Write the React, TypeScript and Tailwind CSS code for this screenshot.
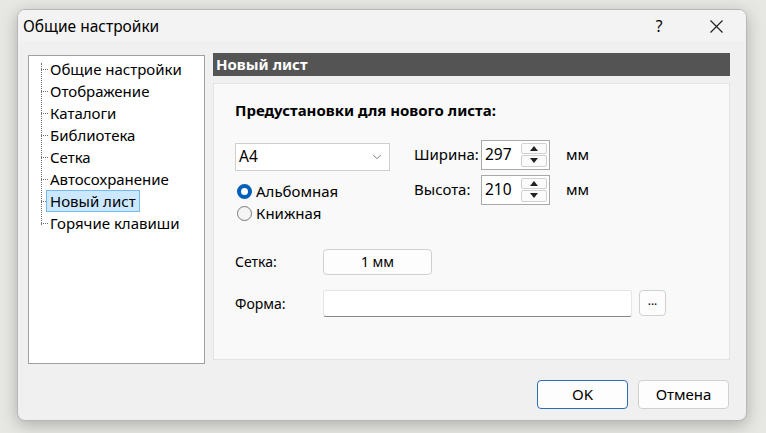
import { ChevronDown } from "lucide-react";

const TREE = [
  "Общие настройки",
  "Отображение",
  "Каталоги",
  "Библиотека",
  "Сетка",
  "Автосохранение",
  "Новый лист",
  "Горячие клавиши",
];

const FONT = { fontFamily: '"Noto Sans", "Open Sans", sans-serif' };

function Spinner({ value }: { value: string }) {
  return (
    <div className="flex h-[30px] w-[69px] border border-[#a9a9a9] bg-white">
      <span className="flex-1 pl-[3px] pt-[2px] text-[15.5px] leading-[22px] text-black">{value}</span>
      <div className="my-[2px] mr-[2px] flex w-[26px] flex-col gap-[1px]">
        <div className="flex flex-1 items-center justify-center rounded-[2px] border border-[#d0d0d0] bg-[#fbfbfb]">
          <svg width="8" height="5" viewBox="0 0 8 5"><path d="M0 5L4 0L8 5Z" fill="#222" /></svg>
        </div>
        <div className="flex flex-1 items-center justify-center rounded-[2px] border border-[#d0d0d0] bg-[#fbfbfb]">
          <svg width="8" height="5" viewBox="0 0 8 5"><path d="M0 0L4 5L8 0Z" fill="#222" /></svg>
        </div>
      </div>
    </div>
  );
}

export default function App() {
  return (
    <div className="h-[433px] w-[766px] bg-[#e7e8e3] pl-[17px] pt-[9px]" style={FONT}>
      <div className="flex h-[412px] w-[730px] flex-col overflow-hidden rounded-[8px] border border-[#b8b8b8] bg-[#f0f0f0] shadow-[0_4px_16px_rgba(0,0,0,0.25)]">
        {/* Title bar */}
        <div className="flex h-[31px] items-center bg-[#f3f3f3] pl-[5px] pt-[2px] text-[15.5px] text-black">
          <span className="flex-1">Общие настройки</span>
          <span className="w-[12px] text-center">?</span>
          <svg className="ml-[45px] mr-[23px]" width="13" height="13" viewBox="0 0 13 13">
            <path d="M0.5 0.5L12.5 12.5M12.5 0.5L0.5 12.5" stroke="#222" strokeWidth="1.2" />
          </svg>
        </div>

        {/* Body */}
        <div className="flex gap-[8px] pl-[10px] pt-[14px]">
          {/* Tree */}
          <div className="relative h-[309px] w-[177px] border border-[#a0a0a0] bg-white">
            <div className="absolute left-[12px] top-[7px] h-[162px] border-l border-dotted border-[#707070]" />
            <div className="flex flex-col pl-[12px] pt-[2px]">
              {TREE.map((t) => (
                <div key={t} className="flex h-[22px] items-center">
                  <div className="w-[7px] border-t border-dotted border-[#707070]" />
                  <span
                    className={`ml-[-2px] px-[3px] text-[15px] leading-[20px] text-black ${
                      t === "Новый лист" ? "border border-[#77b9ef] bg-[#cce8ff]" : "border border-transparent"
                    }`}
                  >
                    {t}
                  </span>
                </div>
              ))}
            </div>
          </div>

          {/* Right side */}
          <div className="flex w-[517px] flex-col">
            <div className="mt-[-2px] flex h-[23px] items-center bg-[#545454] pl-[3px] text-[15px] font-bold text-white">
              Новый лист
            </div>
            <div className="mt-[7px] h-[277px] border border-[#e3e3e3] bg-[#f9f9f9] pl-[21px] pt-[15px] text-black">
              <div className="text-[15px] font-bold">Предустановки для нового листа:</div>

              <div className="mt-[21px] flex">
                <div className="flex w-[180px] flex-col">
                  <div className="flex h-[28px] w-[155px] items-center justify-between border border-[#cfcfcf] bg-white pl-[3px] pr-[5px] text-[15.5px]">
                    <span>A4</span>
                    <ChevronDown size={14} strokeWidth={1.3} color="#555" />
                  </div>
                  <div className="mt-[10px] flex h-[22px] items-center gap-[4px] pl-[2px] text-[15px]">
                    <span className="h-[15px] w-[15px] rounded-full border-[4px] border-[#005fb8] bg-white" />
                    <span>Альбомная</span>
                  </div>
                  <div className="flex h-[22px] items-center gap-[4px] pl-[2px] text-[15px]">
                    <span className="h-[15px] w-[15px] rounded-full border border-[#7a7a7a] bg-[#f5f5f5]" />
                    <span>Книжная</span>
                  </div>
                </div>

                <div className="ml-[-1px] mt-[-3px] flex flex-col gap-[5px]">
                  <div className="flex items-center">
                    <span className="w-[67px] text-[15px]">Ширина:</span>
                    <Spinner value="297" />
                    <span className="ml-[16px] text-[15px]">мм</span>
                  </div>
                  <div className="flex items-center">
                    <span className="w-[67px] text-[15px]">Высота:</span>
                    <Spinner value="210" />
                    <span className="ml-[16px] text-[15px]">мм</span>
                  </div>
                </div>
              </div>

              <div className="mt-[24px] flex items-center">
                <span className="w-[88px] text-[14px]">Сетка:</span>
                <div className="flex h-[26px] w-[109px] items-center justify-center rounded-[4px] border border-[#d0d0d0] bg-[#fdfdfd] text-[14px]">
                  1 мм
                </div>
              </div>

              <div className="mt-[15px] flex items-center">
                <span className="w-[88px] text-[14px]">Форма:</span>
                <div className="h-[27px] w-[309px] rounded-[3px] border border-[#e5e5e5] border-b-[#868686] bg-white" />
                <div className="ml-[7px] flex h-[26px] w-[27px] items-center justify-center rounded-[4px] border border-[#d0d0d0] bg-[#fdfdfd] pb-[4px] text-[12px]">
                  ...
                </div>
              </div>
            </div>
          </div>
        </div>

        {/* Footer buttons */}
        <div className="mt-[16px] flex justify-end gap-[10px] pr-[17px]">
          <div className="flex h-[29px] w-[91px] items-center justify-center rounded-[4px] border border-[#2c6db4] bg-[#fdfdfd] text-[15px]">
            OK
          </div>
          <div className="flex h-[29px] w-[91px] items-center justify-center rounded-[4px] border border-[#d0d0d0] bg-[#fdfdfd] text-[15px]">
            Отмена
          </div>
        </div>
      </div>
    </div>
  );
}
